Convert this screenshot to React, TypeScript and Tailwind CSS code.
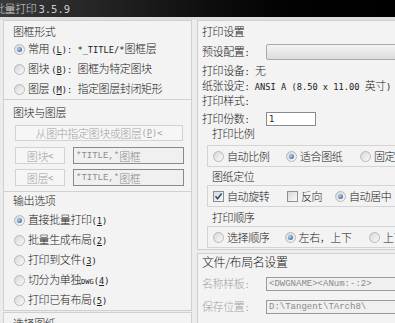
import React from "react";

function Radio({ on }: { on?: boolean }) {
  return (
    <span className="w-[11px] h-[11px] shrink-0 rounded-full border border-[#b9b9b9] bg-linear-to-br from-[#d6d6d6] to-[#fbfbfb] flex items-center justify-center">
      {on && (
        <span className="w-[5px] h-[5px] rounded-full bg-[radial-gradient(circle_at_35%_35%,#b3d3f3,#1e4f90)]" />
      )}
    </span>
  );
}

function Check({ on }: { on?: boolean }) {
  return (
    <span className="w-[11px] h-[11px] shrink-0 border border-[#8e8f8f] bg-linear-to-br from-[#d8d8d8] to-[#fbfbfb] flex items-center justify-center">
      {on && (
        <svg width="9" height="9" viewBox="0 0 9 9">
          <path d="M1.5 4.3 L3.6 6.8 L7.6 1.6" stroke="#2c4f86" strokeWidth="1.6" fill="none" />
        </svg>
      )}
    </span>
  );
}

function L({ children }: { children: React.ReactNode }) {
  return (
    <span className="font-['DejaVu_Sans_Mono',monospace] text-[8.7px] tracking-normal">{children}</span>
  );
}

function M({ k }: { k: string }) {
  return (
    <L>
      (<u>{k}</u>)
    </L>
  );
}

export default function App() {
  return (
    <div className="w-[395px] h-[323px] overflow-hidden bg-[#ececec] text-[#202020] text-[11px] leading-[14px] tracking-[-0.4px] font-light font-['Noto_Sans_CJK_SC','Noto_Sans',sans-serif]">
      {/* title bar */}
      <div className="h-[17px] bg-linear-to-r from-[#3a3a3a] via-[#101010] to-black flex items-center">
        <span className="ml-[-6px] text-[#cfcfcf] text-[11px]">
          批量打印 <span className="font-['DejaVu_Sans_Mono',monospace] text-[10.5px] tracking-normal">3.5.9</span>
        </span>
      </div>
      <div className="h-[3px] bg-[#dedede]" />

      <div className="flex">
        {/* left column */}
        <div className="ml-[3px] w-[189px] shrink-0">
          {/* panel 1 */}
          <div className="border border-[#d0d0d0] bg-[#f3f3f3] pt-[3px]">
            <div className="h-[14px] pl-[9px]">图框形式</div>
            <div className="mt-[1px]">
              <div className="h-[20px] flex items-center pl-[10px] gap-[3px]">
                <Radio on />
                <span>
                  常用 <M k="L" />
                  <L>: *_TITLE/*</L>图框层
                </span>
              </div>
              <div className="h-[20px] flex items-center pl-[10px] gap-[3px]">
                <Radio />
                <span>
                  图块 <M k="B" />
                  <L>: </L>图框为特定图块
                </span>
              </div>
              <div className="h-[20px] flex items-center pl-[10px] gap-[3px]">
                <Radio />
                <span>
                  图层 <M k="M" />
                  <L>: </L>指定图层封闭矩形
                </span>
              </div>
            </div>
          </div>

          {/* panel 2 */}
          <div className="border border-t-0 border-[#d0d0d0] bg-[#f3f3f3] pt-[5px] pb-[5px]">
            <div className="h-[14px] pl-[9px]">图块与图层</div>
            <div className="mt-[6px] ml-[11px] w-[168px] h-[16px] border border-[#d2d2d2] bg-[#f6f6f6] flex items-center justify-center text-[#a2a2a2]">
              从图中指定图块或图层<M k="P" />
              <L>&lt;</L>
            </div>
            <div className="mt-[6px] ml-[11px] flex gap-[8px] h-[17px]">
              <div className="w-[50px] border border-[#d2d2d2] bg-[#f6f6f6] flex items-center justify-center text-[#a2a2a2]">
                图块<L>&lt;</L>
              </div>
              <div className="w-[111px] border border-[#8a8a8a] bg-[#f0f0f0] flex items-center pl-[2px] text-[#8c8c8c]">
                <span className="font-['Liberation_Mono',monospace] text-[9px] tracking-normal">*TITLE,*</span>图框
              </div>
            </div>
            <div className="mt-[5px] ml-[11px] flex gap-[8px] h-[17px]">
              <div className="w-[50px] border border-[#d2d2d2] bg-[#f6f6f6] flex items-center justify-center text-[#a2a2a2]">
                图层<L>&lt;</L>
              </div>
              <div className="w-[111px] border border-[#8a8a8a] bg-[#f0f0f0] flex items-center pl-[2px] text-[#8c8c8c]">
                <span className="font-['Liberation_Mono',monospace] text-[9px] tracking-normal">*TITLE,*</span>图框
              </div>
            </div>
          </div>

          {/* panel 3 */}
          <div className="border border-t-0 border-[#d0d0d0] bg-[#f3f3f3] pt-[1px]">
            <div className="h-[14px] pl-[9px]">输出选项</div>
            <div className="mt-[3px]">
              {[
                ["直接批量打印", "1", true],
                ["批量生成布局", "2", false],
                ["打印到文件", "3", false],
                ["切分为单独", "4", false],
                ["打印已有布局", "5", false],
              ].map(([t, n, on], i) => (
                <div key={i} className="h-[20px] flex items-center pl-[10px] gap-[3px]">
                  <Radio on={on as boolean} />
                  <span>
                    {t as string}
                    {i === 3 && <span className="font-['DejaVu_Sans_Mono',monospace] text-[7px] tracking-normal">DWG</span>}
                    <M k={n as string} />
                  </span>
                </div>
              ))}
            </div>
          </div>

          {/* panel 4 */}
          <div className="mt-[1px] border border-[#d0d0d0] bg-[#f3f3f3] pt-[3px] h-[30px]">
            <div className="h-[14px] pl-[9px]">选择图纸</div>
          </div>
        </div>

        {/* right column */}
        <div className="ml-[5px] w-[240px] shrink-0">
          <div className="border border-[#d0d0d0] bg-[#f3f3f3] pt-[3px] pb-[1px] pl-[4px]">
            <div className="h-[14px]">打印设置</div>
            <div className="mt-[6px] h-[16px] flex items-center">
              <span className="w-[64px]">
                预设配置<L>:</L>
              </span>
              <div className="w-[170px] h-[16px] rounded-[2px] border border-[#a9a9a9] bg-linear-to-b from-[#f4f4f4] to-[#dcdcdc]" />
            </div>
            <div className="mt-[3px] h-[14px] whitespace-nowrap">
              打印设备<L>: </L>无
            </div>
            <div className="mt-[1px] h-[14px] whitespace-nowrap">
              纸张设定<L>: ANSI A (8.50 x 11.00 </L>英寸<L>)</L>
            </div>
            <div className="mt-[1px] h-[14px]">
              打印样式<L>:</L>
            </div>
            <div className="mt-[5px] h-[14px] flex items-center">
              <span className="w-[64px]">
                打印份数<L>:</L>
              </span>
              <div className="w-[50px] h-[14px] border border-[#8a8a8a] bg-white flex items-center pl-[2px]">
                <L>1</L>
              </div>
            </div>

            <div className="h-[14px] pl-[10px]">打印比例</div>
            <div className="mt-[5px] ml-[5px] h-[22px] border border-r-0 border-[#d4d4d4] flex items-center pl-[5px] whitespace-nowrap">
              <div className="w-[73px] flex items-center gap-[3px]">
                <Radio />
                <span>自动比例</span>
              </div>
              <div className="w-[74px] flex items-center gap-[3px]">
                <Radio on />
                <span>适合图纸</span>
              </div>
              <div className="flex items-center gap-[3px]">
                <Radio />
                <span>固定比例</span>
              </div>
            </div>

            <div className="mt-[2px] h-[14px] pl-[10px]">图纸定位</div>
            <div className="mt-[2px] ml-[5px] h-[22px] border border-r-0 border-[#d4d4d4] flex items-center pl-[5px] whitespace-nowrap">
              <div className="w-[74px] flex items-center gap-[3px]">
                <Check on />
                <span>自动旋转</span>
              </div>
              <div className="w-[48px] flex items-center gap-[3px]">
                <Check />
                <span>反向</span>
              </div>
              <div className="flex items-center gap-[3px]">
                <Radio on />
                <span>自动居中</span>
              </div>
            </div>

            <div className="mt-[3px] h-[14px] pl-[10px]">打印顺序</div>
            <div className="mt-[2px] ml-[5px] h-[22px] border border-r-0 border-[#d4d4d4] flex items-center pl-[5px] whitespace-nowrap">
              <div className="w-[72px] flex items-center gap-[3px]">
                <Radio />
                <span>选择顺序</span>
              </div>
              <div className="w-[85px] flex items-center gap-[3px]">
                <Radio on />
                <span>左右，上下</span>
              </div>
              <div className="flex items-center gap-[3px]">
                <Radio />
                <span>上下，左右</span>
              </div>
            </div>
          </div>

          <div className="mt-[3px] border border-[#d0d0d0] bg-[#f3f3f3] pt-[1px] pl-[4px] h-[80px]">
            <div className="h-[14px] text-[12px]">文件/布局名设置</div>
            <div className="mt-[8px] h-[14px] flex items-center">
              <span className="w-[64px] text-[#a5a5a5]">
                名称样板<L>:</L>
              </span>
              <div className="w-[170px] h-[14px] border border-[#9a9a9a] bg-[#f0f0f0] flex items-center pl-[2px] text-[#8a8a8a] font-['Liberation_Mono',monospace] text-[9px] tracking-normal">
                &lt;DWGNAME&gt;&lt;ANum:-:2&gt;
              </div>
            </div>
            <div className="mt-[9px] h-[14px] flex items-center">
              <span className="w-[64px] text-[#a5a5a5]">
                保存位置<L>:</L>
              </span>
              <div className="w-[170px] h-[14px] border border-[#9a9a9a] bg-[#f0f0f0] flex items-center pl-[2px] text-[#8a8a8a] font-['Liberation_Mono',monospace] text-[9px] tracking-normal">
                D:\Tangent\TArch8\
              </div>
            </div>
          </div>
        </div>
      </div>
    </div>
  );
}
